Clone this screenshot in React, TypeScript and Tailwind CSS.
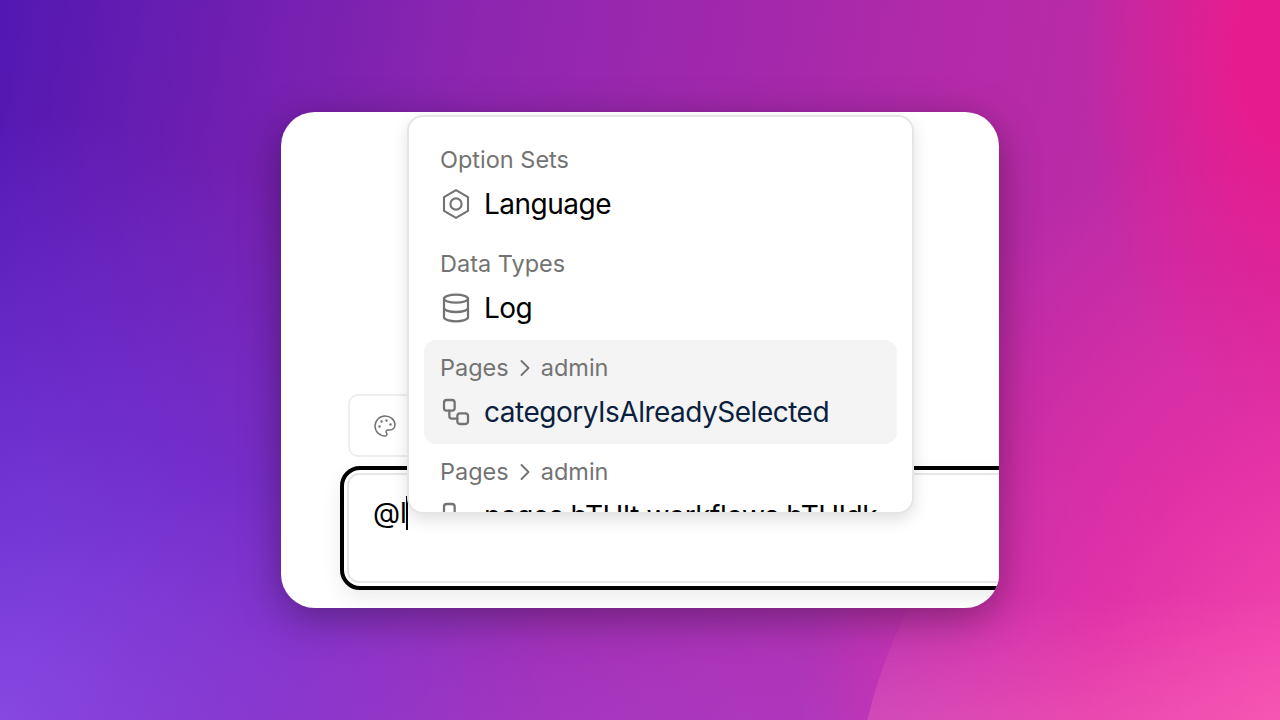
import { ChevronRight, Database, Palette, Workflow } from "lucide-react";
import type { ReactNode } from "react";

function NutIcon() {
  return (
    <svg
      width="32"
      height="32"
      viewBox="0 0 24 24"
      fill="none"
      stroke="currentColor"
      strokeWidth="1.6"
      strokeLinejoin="round"
    >
      <path d="M12 1.600 21 6.800v10.400L12 22.400 3 17.200V6.800z" />
      <circle cx="12" cy="12" r="4.200" />
    </svg>
  );
}

function Row({
  label,
  icon,
  title,
  active,
}: {
  label: ReactNode;
  icon: ReactNode;
  title: string;
  active?: boolean;
}) {
  return (
    <div
      className={
        active
          ? "h-[104px] shrink-0 rounded-[12px] bg-[#f4f4f4] px-4 py-2"
          : "h-[104px] shrink-0 rounded-[12px] px-4 py-2"
      }
    >
      <div className="flex h-10 items-center text-[23.500px] text-[#737373]">{label}</div>
      <div className="flex h-12 items-center gap-3">
        <span className="flex w-8 shrink-0 justify-center text-[#737373]">{icon}</span>
        <span
          className={
            active
              ? "whitespace-nowrap text-[28px] tracking-[-0.5px] text-[#0c1f3f]"
              : "whitespace-nowrap text-[28px] tracking-[-0.5px] text-black"
          }
        >
          {title}
        </span>
      </div>
    </div>
  );
}

function PageLabel() {
  return (
    <>
      Pages
      <ChevronRight className="mx-[2px] h-7 w-7" strokeWidth={1.6} />
      admin
    </>
  );
}

export default function App() {
  return (
    <div className="relative flex h-screen w-full items-center justify-center overflow-hidden bg-[radial-gradient(ellipse_210px_380px_at_1290px_50px,#e61c8e_25%,transparent_100%),radial-gradient(ellipse_560px_640px_at_1360px_740px,#fa4fb0_0%,rgba(238,50,165,0.72)_50%,transparent_100%),radial-gradient(ellipse_900px_360px_at_700px_790px,rgba(175,70,210,0.6)_0%,transparent_100%),radial-gradient(ellipse_560px_620px_at_0px_730px,#8248e4_0%,rgba(115,55,220,0.6)_55%,transparent_100%),linear-gradient(100deg,#5218b2_0%,#8e26b0_35%,#b42aa8_70%,#c82ca6_100%)] font-['Inter',sans-serif]">
      {/* soft curved shape behind the card, bottom right */}
      <div className="absolute left-[854px] top-[335px] h-[1000px] w-[1000px] rounded-full bg-[linear-gradient(to_bottom,transparent_26%,rgba(255,120,190,0.3)_38%)]" />

      <div className="relative flex h-[496px] w-[718px] flex-col justify-end overflow-hidden rounded-[34px] bg-white pb-[18px] pl-[59px] shadow-[0_10px_40px_rgba(0,0,0,0.35)]">
        <div className="mb-[9px] ml-[8px] flex h-[63px] w-[120px] items-center rounded-[10px] border-2 border-[#eeeeee] pl-[23px] text-[#737373]">
          <Palette className="h-6 w-6" strokeWidth={1.5} />
        </div>

        <div className="w-[800px] rounded-[20px] border-4 border-black bg-white p-[3px] shadow-[0_8px_20px_rgba(0,0,0,0.08)]">
          <div className="h-[110px] rounded-[12px] border-2 border-[#e6e6e6] pl-6 pt-[18px] text-[28px] leading-[40px] text-black">
            <span className="relative">
              @l
              <span className="absolute left-[33px] top-0 h-[34px] w-[2px] bg-black" />
            </span>
          </div>
        </div>

        <div className="absolute left-[126px] top-[3px] flex h-[399px] w-[507px] flex-col overflow-hidden rounded-[16px] border-2 border-[#e5e5e5] bg-white p-[15px] shadow-[0_6px_16px_rgba(0,0,0,0.12)]">
          <Row label="Option Sets" icon={<NutIcon />} title="Language" />
          <Row
            label="Data Types"
            icon={<Database className="h-8 w-8" strokeWidth={1.7} />}
            title="Log"
          />
          <Row
            active
            label={<PageLabel />}
            icon={<Workflow className="h-8 w-8" strokeWidth={1.7} />}
            title="categoryIsAlreadySelected"
          />
          <Row
            label={<PageLabel />}
            icon={<Workflow className="h-8 w-8" strokeWidth={1.7} />}
            title="pages.bTHIt.workflows.bTHIdk"
          />
        </div>
      </div>
    </div>
  );
}
